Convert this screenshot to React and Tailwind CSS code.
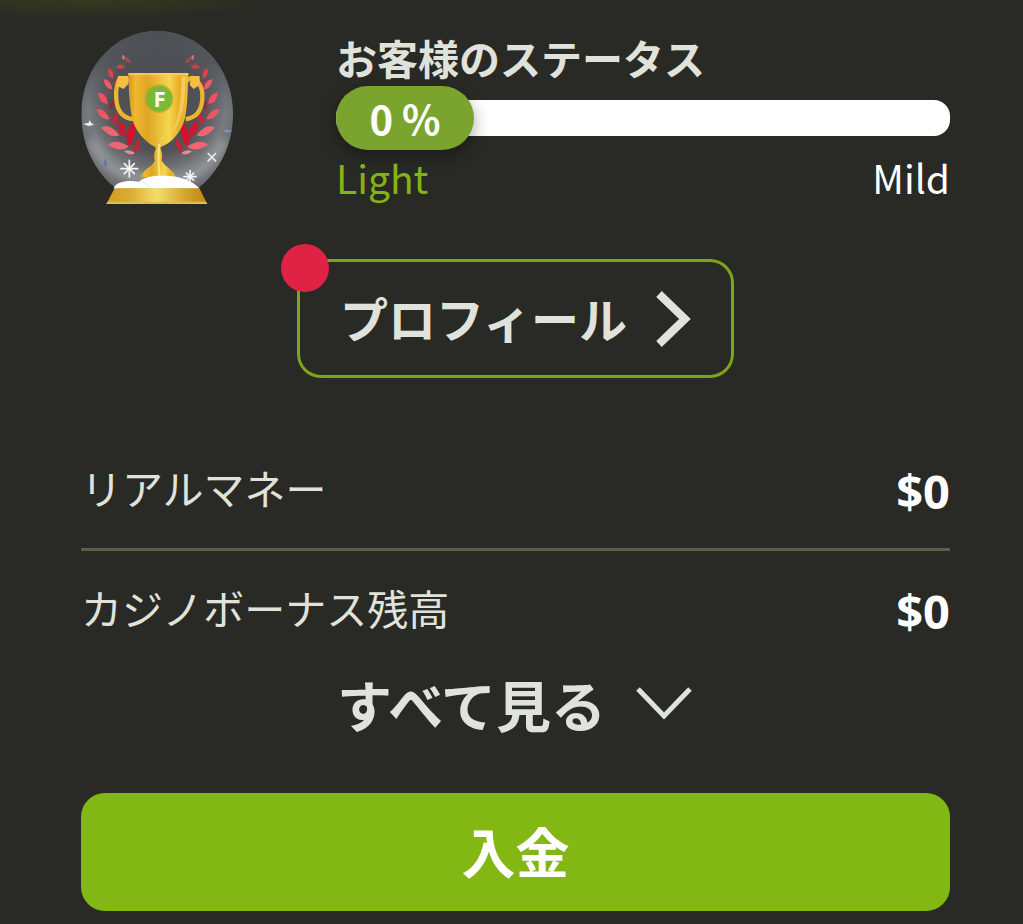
import React from 'react';

const balances = [
    { label: 'リアルマネー', amount: '$0' },
    { label: 'カジノボーナス残高', amount: '$0' },
];

// leaves of the left laurel branch: [cx, cy, rx, ry, rotation, colour]
const leaves = [
    [174, 120, 14, 5, 40, '#a94954'],
    [153, 140, 14, 7, -10, '#c8414f'],
    [161, 112, 8, 4, 75, '#d67480'],
    [123, 160, 17, 7, 65, '#e43f50'],
    [140, 186, 14, 6, -45, '#b93544'],
    [115, 193, 20, 8, 48, '#f05a68'],
    [100, 235, 22, 10, 48, '#f3505f'],
    [127, 252, 19, 7, -68, '#8d2c38'],
    [100, 283, 25, 10, 35, '#ee5666'],
    [137, 296, 21, 8, -75, '#c3263a'],
    [122, 334, 30, 11, 23, '#ef6673'],
    [158, 326, 26, 11, 65, '#ce1731'],
    [146, 377, 32, 11, 5, '#ee6671'],
    [184, 343, 38, 12, -82, '#d5122c'],
    [180, 397, 17, 6, 8, '#ef8790'],
    [202, 378, 25, 8, -75, '#bd2636'],
];

const Branch = () => (
    <g>
        <path d="M170 115C112 160 98 225 120 282c18 52 53 94 134 137" fill="none" stroke="#a93a45" strokeWidth="3" strokeDasharray="9 5" />
        {leaves.map(([cx, cy, rx, ry, angle, fill]) => (
            <path
                key={`${cx}-${cy}`}
                d={`M${-rx} 0Q${-rx / 3} ${-ry * 2} ${rx} 0Q${rx / 3} ${ry * 2} ${-rx} 0Z`}
                transform={`translate(${cx} ${cy}) rotate(${angle})`}
                fill={fill}
            />
        ))}
    </g>
);

const Snowflake = ({ x, y, r }) => (
    <g transform={`translate(${x} ${y})`} stroke="#f4f5f6" strokeWidth="5" strokeLinecap="round">
        <path d={`M0 ${-r}V${r}M${-r} 0H${r}`} />
        <path d={`M${-r * 0.6} ${-r * 0.6}L${r * 0.6} ${r * 0.6}M${r * 0.6} ${-r * 0.6}L${-r * 0.6} ${r * 0.6}`} />
    </g>
);

const TrophyGlobe = () => (
    <svg viewBox="34 30 465 525" className="h-[175px] w-[155px] shrink-0" aria-hidden="true">
        <defs>
            <radialGradient id="glass" cx="50%" cy="46%" r="54%">
                <stop offset="0" stopColor="#4b4d50" />
                <stop offset="0.55" stopColor="#505256" />
                <stop offset="0.82" stopColor="#777a7e" />
                <stop offset="1" stopColor="#686b70" />
            </radialGradient>
            <linearGradient id="shade" x1="0" y1="0" x2="0" y2="1">
                <stop offset="0" stopColor="#4c4f53" />
                <stop offset="0.2" stopColor="#4c4f53" stopOpacity="0.8" />
                <stop offset="0.5" stopColor="#4c4f53" stopOpacity="0" />
            </linearGradient>
            <linearGradient id="cup" x1="0" y1="0" x2="1" y2="0">
                <stop offset="0" stopColor="#d8951c" />
                <stop offset="0.12" stopColor="#edb930" />
                <stop offset="0.32" stopColor="#dfa524" />
                <stop offset="0.68" stopColor="#f5d64f" />
                <stop offset="0.85" stopColor="#e7ad28" />
                <stop offset="1" stopColor="#efbd32" />
            </linearGradient>
            <linearGradient id="base" x1="0" y1="0" x2="1" y2="0">
                <stop offset="0" stopColor="#d19b20" />
                <stop offset="0.25" stopColor="#d9ae36" />
                <stop offset="0.5" stopColor="#f3de6b" />
                <stop offset="0.8" stopColor="#d2a22a" />
                <stop offset="1" stopColor="#bd8516" />
            </linearGradient>
            <filter id="soft" x="-30%" y="-30%" width="160%" height="160%">
                <feGaussianBlur stdDeviation="14" />
            </filter>
            <clipPath id="globe">
                <path d="M262 33C388 33 490 142 490 282c0 94-42 173-105 223H138C76 455 35 376 35 282 35 142 136 33 262 33Z" />
            </clipPath>
        </defs>
        <g clipPath="url(#globe)">
            <path d="M30 30h465v480H30z" fill="url(#glass)" />
            <path d="M30 30h465v480H30z" fill="url(#shade)" />
            <path d="M65 360C100 440 150 478 262 482s165-40 202-122" fill="none" stroke="#b9bbbe" strokeWidth="28" opacity="0.6" filter="url(#soft)" />
        </g>
        <Branch />
        <g transform="translate(530 0) scale(-1 1)">
            <Branch />
        </g>
        <path d="M180 184c-12-14-32-14-34 2-6 14-8 30-6 52 3 38 20 56 50 59" fill="none" stroke="#edb52f" strokeWidth="13" />
        <path d="M350 184c12-14 30-14 35 2 13 16 15 30 13 52-3 38-22 56-50 59" fill="none" stroke="#edb52f" strokeWidth="13" />
        <path d="M145 168h31v24l-14 15-20-10zM365 168h25v27l-18 12-12-12z" fill="#f1c044" />
        <path d="M176 159h180c-2 43-1 99-11 138-11 43-44 75-70 83h-20c-27-14-57-44-67-83-9-39-11-95-12-138Z" fill="url(#cup)" />
        <path d="M176 159h180v7H176z" fill="#ffd35c" opacity="0.7" />
        <path d="M335 170c2 62-9 136-27 164 22-18 36-52 40-164z" fill="#ffe28a" opacity="0.5" />
        <path d="M248 350h38c-10 14-14 22-13 38 5 10 4 22 3 34 10 18 32 24 43 50H212c10-27 37-31 43-50-2-12-3-24 3-34-1-16-4-27-10-38Z" fill="url(#cup)" />
        <path d="M269 372c-4 34-3 64 1 98" fill="none" stroke="#fff09a" strokeWidth="7" opacity="0.7" />
        <circle cx="268" cy="236" r="43" fill="#b6a52b" opacity="0.7" />
        <circle cx="268" cy="236" r="39" fill="#79b936" />
        <text x="270" y="260" textAnchor="middle" fill="#fff" className="font-['Open_Sans',sans-serif] text-[66px] font-bold">F</text>
        <path d="M132 506c6-22 42-26 76-21 16-15 50-20 88-17 35 1 75 15 94 38Z" fill="#fff" />
        <path d="M208 485c15 2 25 8 34 16" fill="none" stroke="#e1e3e7" strokeWidth="3" />
        <path d="M135 505h254l24 47H110Z" fill="url(#base)" />
        <path d="M114 545h295l4 7H110z" fill="#e5bd49" />
        <Snowflake x={179} y={446} r={25} />
        <Snowflake x={361} y={470} r={18} />
        <path d="m414 399 25 25m0-25-25 25" stroke="#e6e8ec" strokeWidth="5" />
        <path d="m40 312 17-4 3-8 4 8 9 6-16 4z" fill="#eef0f2" />
        <path d="m459 332 14-4 15 6-15 4z" fill="#7e93b5" />
        <path d="m106 413-4 18 6 12 5-14z" fill="#60789d" />
    </svg>
);

const StatusBar = ({ percent, from, to }) => (
    <div className="min-w-0 flex-1">
        <h2 className="pb-0.5 text-[41px] leading-[54px] font-bold">お客様のステータス</h2>
        <div role="progressbar" aria-label="お客様のステータス" aria-valuenow={percent} aria-valuemin={0} aria-valuemax={100} className="my-[14px] flex h-9 items-center rounded-2xl bg-white">
            <span className="flex h-16 min-w-[138px] items-center justify-center rounded-full bg-[#7ba42f] text-[40px] font-bold text-white shadow-[0_6px_16px_rgba(0,0,0,0.35)]">
                {percent} %
            </span>
        </div>
        <div className="flex justify-between text-[39px] leading-[54px]">
            <span className="text-[#82b414]">{from}</span>
            <span className="text-white">{to}</span>
        </div>
    </div>
);

export default function App() {
    return (
        <div className="min-h-screen bg-[#292925] bg-[radial-gradient(ellipse_190px_20px_at_90px_0px,#33391f,#31361f_30%,transparent)] pt-[30px] pr-[73px] pb-3 pl-[81px] font-['Noto_Sans_CJK_JP',sans-serif] text-[#e0e3dc]">
            <section className="flex items-start gap-[100px]">
                <TrophyGlobe />
                <StatusBar percent={0} from="Light" to="Mild" />
            </section>

            <div className="mt-[54px] flex justify-center">
                <button type="button" className="relative flex h-[119px] items-center gap-7 rounded-3xl border-3 border-[#7da41b] px-10 text-[48px] font-bold">
                    <span className="pb-1">プロフィール</span>
                    <svg viewBox="0 0 36 56" className="h-14 w-9" fill="none" stroke="currentColor" strokeWidth="8" aria-hidden="true">
                        <path d="m4 3 26 25L4 53" />
                    </svg>
                    <span className="absolute -top-[18px] -left-[19px] size-12 rounded-full bg-[#e02244]" />
                </button>
            </div>

            <dl className="mt-[53px]">
                {balances.map(item => (
                    <div key={item.label} className="flex h-[120px] items-center justify-between border-b-3 border-[#5d6046] last:h-[117px] last:border-b-0">
                        <dt className="pb-1 text-[41px]">{item.label}</dt>
                        <dd className="pt-1 font-['Noto_Sans',sans-serif] text-[47px] font-bold text-white">{item.amount}</dd>
                    </div>
                ))}
            </dl>

            <button type="button" className="mx-auto flex h-[74px] items-center gap-7 text-[55px] font-bold">
                <span className="pb-1">すべて見る</span>
                <svg viewBox="0 0 60 40" className="h-10 w-[60px]" fill="none" stroke="currentColor" strokeWidth="5" aria-hidden="true">
                    <path d="m4 4 26 27L56 4" />
                </svg>
            </button>

            <button type="button" className="mt-[51px] flex h-[118px] w-full items-center justify-center rounded-3xl bg-[#83b713] text-[54px] font-bold text-white">
                <span className="pb-1">入金</span>
            </button>
        </div>
    );
}
